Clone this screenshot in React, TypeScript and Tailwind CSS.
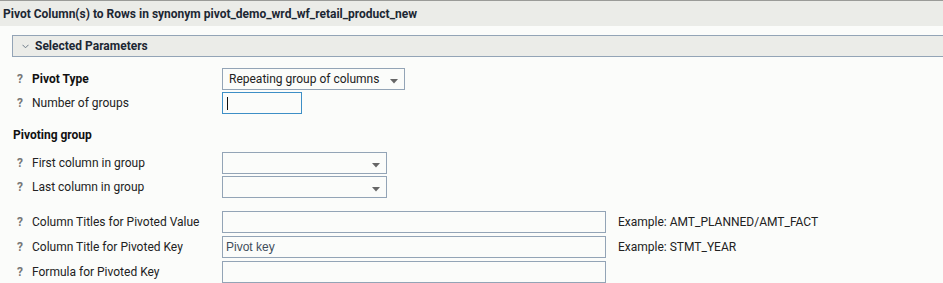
import React from "react";

const Arrow = () => (
  <svg width="8" height="5" viewBox="0 0 8 5" className="absolute right-[6px] bottom-[5px]">
    <polygon points="0,0 8,0 4,4.5" fill="#666" />
  </svg>
);

const Q = () => <span className="w-[15px] text-[#777] font-bold text-[12px]">?</span>;

function Row({
  label,
  bold,
  h,
  children,
  example,
}: {
  label: string;
  bold?: boolean;
  h: string;
  children: React.ReactNode;
  example?: string;
}) {
  return (
    <div className={`flex items-center ${h}`}>
      <div className="w-[222px] flex items-center pl-[17px]">
        <Q />
        <span className={bold ? "font-bold text-[#111]" : "text-[#222]"}>{label}</span>
      </div>
      {children}
      {example && <span className="ml-[12px] text-[#222]">{example}</span>}
    </div>
  );
}

export default function App() {
  return (
    <div
      className="w-[943px] h-[283px] overflow-hidden bg-[#fbfcfa] text-[12px] text-[#222]"
      style={{ fontFamily: "Roboto, 'Liberation Sans', sans-serif" }}
    >
      <div className="border-t border-[#9a9b98] bg-[#ebece8] h-[26px] flex items-center pl-[3px] font-bold text-[#1c2733]">
        Pivot Column(s) to Rows in synonym pivot_demo_wrd_wf_retail_product_new
      </div>
      <div className="h-[9px]" />
      <div className="ml-[12px] h-[22px] border-y border-l border-[#93a4b6] bg-[#ebece8] flex items-center">
        <svg width="7" height="5" viewBox="0 0 7 5" className="ml-[9px] mr-[6px]">
          <polyline points="0.5,0.8 3.5,3.8 6.5,0.8" fill="none" stroke="#6d7b88" strokeWidth="1" />
        </svg>
        <span className="font-bold text-[#1c2733]">Selected Parameters</span>
      </div>
      <div className="h-[10px]" />
      <Row label="Pivot Type" bold h="h-[24px]">
        <div className="relative w-[183px] h-[22px] border border-[#93a4b6] bg-[#fbfcfa] flex items-center pl-[6px] text-[#222]">
          Repeating group of columns
          <Arrow />
        </div>
      </Row>
      <Row label="Number of groups" h="h-[24px]">
        <div className="w-[80px] h-[22px] border border-[#3d8fc6] bg-[#fbfcfa] flex items-center pl-[4px]">
          <div className="w-[1px] h-[13px] bg-[#111]" />
        </div>
      </Row>
      <div className="h-[36px] flex items-center pl-[13px] pt-[4px] font-bold text-[#111]">Pivoting group</div>
      <Row label="First column in group" h="h-[24px]">
        <div className="relative w-[165px] h-[22px] border border-[#93a4b6] bg-[#fbfcfa]">
          <Arrow />
        </div>
      </Row>
      <Row label="Last column in group" h="h-[24px]">
        <div className="relative w-[165px] h-[22px] border border-[#93a4b6] bg-[#fbfcfa]">
          <Arrow />
        </div>
      </Row>
      <div className="h-[10px]" />
      <Row label="Column Titles for Pivoted Value" h="h-[25px]" example="Example: AMT_PLANNED/AMT_FACT">
        <div className="w-[384px] h-[22px] border border-[#93a4b6] bg-[#fbfcfa]" />
      </Row>
      <Row label="Column Title for Pivoted Key" h="h-[25px]" example="Example: STMT_YEAR">
        <div
          className="w-[384px] h-[22px] border border-[#93a4b6] bg-[#fbfcfa] flex items-center pl-[3px] text-[#3f4d5a]"
          style={{ fontFamily: "'Liberation Sans', Arial, sans-serif" }}
        >
          Pivot key
        </div>
      </Row>
      <Row label="Formula for Pivoted Key" h="h-[25px]">
        <div className="w-[384px] h-[22px] border border-[#93a4b6] bg-[#fbfcfa]" />
      </Row>
    </div>
  );
}
